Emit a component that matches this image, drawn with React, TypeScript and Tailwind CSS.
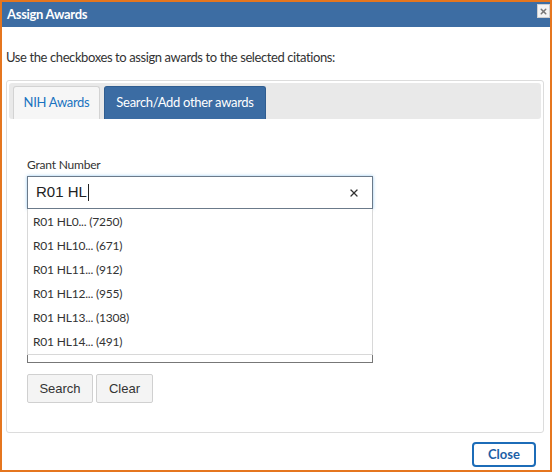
import { X } from "lucide-react";

const suggestions = [
  "R01 HL0... (7250)",
  "R01 HL10... (671)",
  "R01 HL11... (912)",
  "R01 HL12... (955)",
  "R01 HL13... (1308)",
  "R01 HL14... (491)",
];

const sans = "font-['Lato','Noto_Sans',sans-serif]";

const App = () => {
  return (
    <div className={`w-[552px] h-[472px] border-2 border-[#e5761f] bg-white flex flex-col ${sans}`}>
      {/* title bar */}
      <div className="h-[25px] bg-[#3d6da3] flex items-center justify-between pl-[5px]">
        <span className="text-[13px] font-bold text-white tracking-[-0.3px]">Assign Awards</span>
        <button className="w-[13px] h-[14px] bg-[#f4f4f4] border border-[#cfcfcf] flex items-center justify-center self-start mt-[2px]">
          <X size={9} strokeWidth={4} className="text-[#777]" />
        </button>
      </div>

      <div className="flex-1 flex flex-col pl-[4px] pr-[6px]">
        <p className="text-[13px] text-[#333] mt-[22px] leading-[17px] tracking-[-0.4px]">
          Use the checkboxes to assign awards to the selected citations:
        </p>

        <div className="mt-[14px] border border-[#dcdcdc] rounded-[3px] p-[2px] h-[353px] flex flex-col">
          {/* tabs */}
          <div className="bg-[#e9e9e9] rounded-[3px] pt-[3px] pl-[4px] flex gap-[4px] h-[36px]">
            <div className="w-[87px] h-[33px] bg-[#f6f6f6] border border-[#d3d3d3] border-b-0 rounded-t-[3px] flex items-center justify-center text-[13px] text-[#1a73c0] tracking-[-0.3px]">
              NIH Awards
            </div>
            <div className="w-[162px] h-[33px] bg-[#3b6ca3] border border-[#2f5d90] border-b-0 rounded-t-[3px] flex items-center justify-center text-[13px] text-white tracking-[-0.3px]">
              Search/Add other awards
            </div>
          </div>

          {/* panel */}
          <div className="pl-[18px] pt-[38px]">
            <label className="block text-[12px] text-[#333] leading-[16px] tracking-[-0.2px]">Grant Number</label>
            <div className="relative mt-[3px] w-[346px]">
              <div className="h-[33px] border border-[#6b7a8a] shadow-[0_0_3px_rgba(102,175,233,0.7)] flex items-center justify-between pl-[8px] pr-[12px] bg-white">
                <span className="text-[15px] text-[#222] font-['Liberation_Sans',Arial,sans-serif] flex items-center">
                  R01 HL<span className="w-px h-[17px] bg-[#222] ml-px" />
                </span>
                <X size={12} strokeWidth={2.5} className="text-[#333]" />
              </div>
              <div className="h-[154px] border border-[#777] border-t-0 bg-white" />

              {/* autocomplete list */}
              <ul className="absolute left-0 top-[33px] w-[346px] bg-white border border-[#d8d8d8] border-t-0 pt-[1px]">
                {suggestions.map((s) => (
                  <li key={s} className="h-[24px] flex items-center pl-[5px] text-[12px] text-[#333] tracking-[-0.2px]">
                    {s}
                  </li>
                ))}
              </ul>
            </div>

            <div className="flex gap-[3px] mt-[11px]">
              <button className="w-[66px] h-[29px] bg-[#f4f4f4] border border-[#d0d0d0] rounded-[2px] text-[13px] text-[#333] font-['Liberation_Sans',Arial,sans-serif]">
                Search
              </button>
              <button className="w-[57px] h-[29px] bg-[#f4f4f4] border border-[#d0d0d0] rounded-[2px] text-[13px] text-[#333] font-['Liberation_Sans',Arial,sans-serif]">
                Clear
              </button>
            </div>
          </div>
        </div>

        <div className="flex justify-end mt-[9px] pr-[8px]">
          <button className="w-[64px] h-[25px] border-2 border-[#1c6cb8] rounded-[4px] text-[13px] font-bold text-[#1c5fa6] bg-white">
            Close
          </button>
        </div>
      </div>
    </div>
  );
};

export default App;
